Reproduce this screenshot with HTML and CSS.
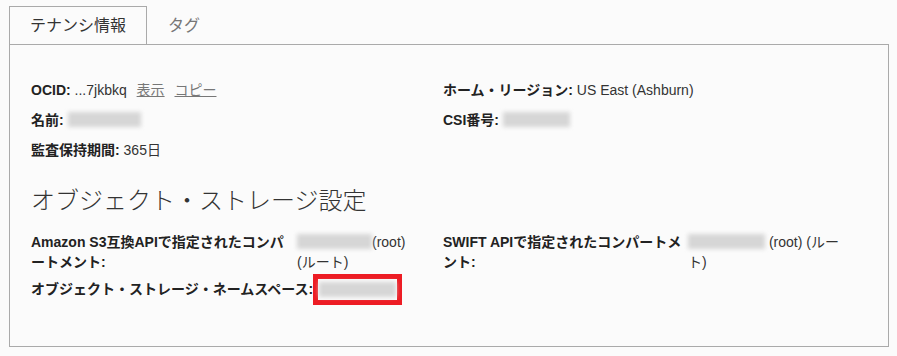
FILE: index.html
```html
<!DOCTYPE html>
<html lang="ja">
<head>
    <meta charset="UTF-8">
    <meta name="viewport" content="width=device-width, initial-scale=1.0">
    <title>テナンシ情報</title>
    <link rel="stylesheet" href="styles.css">
</head>
<body>
    <div class="tabs">
        <div class="tab active">テナンシ情報</div>
        <div class="tab">タグ</div>
    </div>
    <div class="panel">
        <div class="infoGrid">
            <div class="row"><b>OCID:</b> ...7jkbkq <a href="#">表示</a> <a href="#">コピー</a></div>
            <div class="row"><b>ホーム・リージョン:</b> US East (Ashburn)</div>
            <div class="row"><b>名前:</b> <span class="blur w73"></span></div>
            <div class="row"><b>CSI番号:</b> <span class="blur w67"></span></div>
            <div class="row"><b>監査保持期間:</b> 365日</div>
        </div>

        <h2>オブジェクト・ストレージ設定</h2>

        <div class="storageGrid">
            <div class="pair">
                <div class="label labelS3">Amazon S3互換APIで指定されたコンパートメント:</div>
                <div class="value valueS3"><span class="blur w75"></span>(root) (ルート)</div>
            </div>
            <div class="pair">
                <div class="label labelSwift">SWIFT APIで指定されたコンパートメント:</div>
                <div class="value valueSwift"><span class="blur w77"></span> (root) (ルート)</div>
            </div>
            <div class="row namespace">
                <b>オブジェクト・ストレージ・ネームスペース:</b><span class="mark"><span class="blur w77"></span></span>
            </div>
        </div>
    </div>
</body>
</html>
```

FILE: styles.css
```css
body {
    margin: 0;
    padding: 6px 8px 0 9px;
    background-color: #fbfbfb;
    font-family: 'Liberation Sans', Arial, 'Noto Sans CJK JP', sans-serif;
    font-size: 14px;
    color: #333;
}
.tabs {
    display: flex;
}
.tab {
    padding: 0 20px;
    height: 37px;
    line-height: 37px;
    font-size: 16px;
    color: #777;
    border: 1px solid transparent;
    border-bottom: none;
}
.tab.active {
    color: #333;
    border-color: #aaa;
    background-color: #fbfbfb;
    margin-bottom: -1px;
    height: 37px;
    position: relative;
}
.panel {
    border: 1px solid #aaa;
    padding: 35px 21px 46px 21px;
}
.infoGrid {
    display: grid;
    grid-template-columns: 412px 1fr;
    row-gap: 10px;
}
.row {
    line-height: 20px;
}
.row b, .label {
    font-weight: bold;
    color: #222;
}
.row a {
    color: #777;
    margin-left: 6px;
}
h2 {
    margin: 25px 0 15px;
    font-size: 24px;
    font-weight: 300;
    line-height: 32px;
    color: #333;
}
.storageGrid {
    display: grid;
    grid-template-columns: 412px 1fr;
    row-gap: 7px;
}
.pair {
    display: flex;
    line-height: 20px;
}
.labelS3 {
    width: 262px;
    margin-right: 4px;
}
.valueS3 {
    width: 118px;
}
.labelSwift {
    width: 240px;
    margin-right: 5px;
}
.valueSwift {
    width: 152px;
}
.blur {
    display: inline-block;
    height: 15px;
    background-color: #d6d6d6;
    filter: blur(2px);
    vertical-align: -2px;
}
.w67 { width: 67px; }
.w73 { width: 73px; }
.w75 { width: 75px; }
.w77 { width: 77px; }
.namespace {
    grid-column: 1 / 3;
}
.mark {
    display: inline-block;
    margin: -7px 0 -5px 0;
    padding: 3px 1px 3px 1px;
    border: 5px solid #ed1c24;
    line-height: 15px;
    vertical-align: middle;
}
.mark .blur {
    vertical-align: top;
}
```
